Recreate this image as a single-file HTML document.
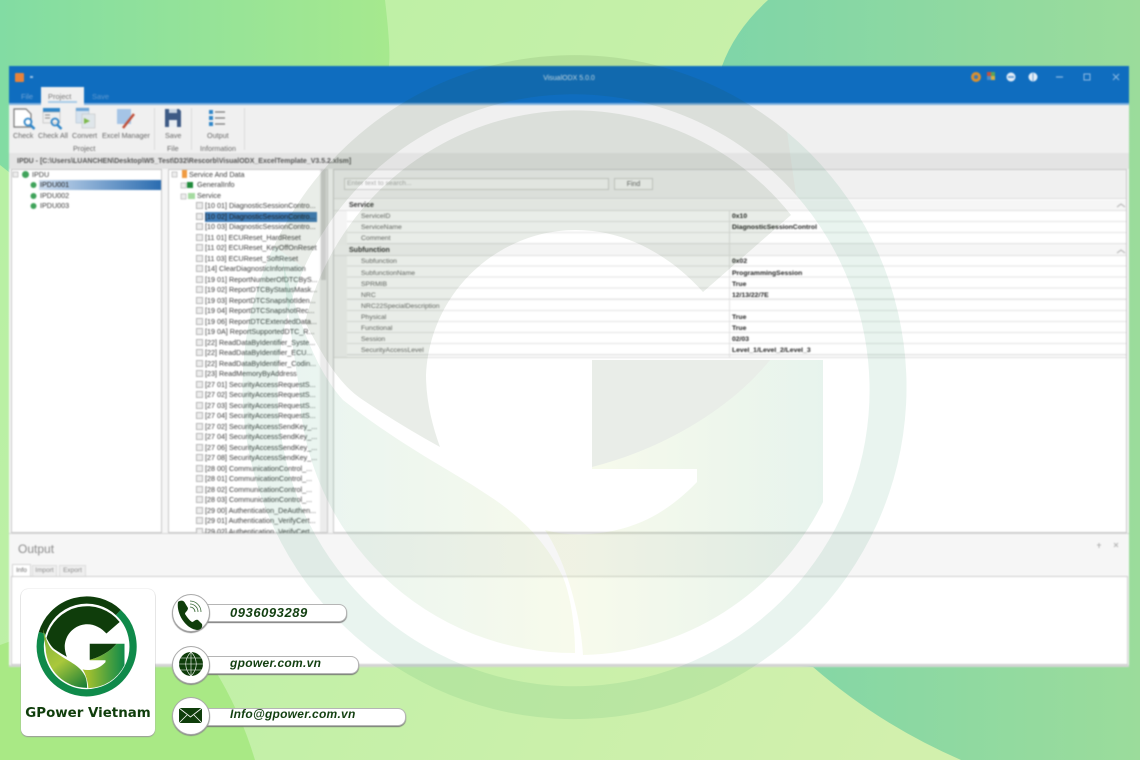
<!DOCTYPE html>
<html><head><meta charset="utf-8">
<style>
html,body{margin:0;padding:0;background:#c0f2a6}
#p{position:relative;width:1140px;height:760px;overflow:hidden;font-family:"Liberation Sans",sans-serif}
svg.l{position:absolute;left:0;top:0}
#w{position:absolute;left:9px;top:66px;width:1120px;height:601px;background:#f6f6f6;overflow:hidden;filter:blur(.85px)}
#w div{position:absolute;white-space:nowrap}
#w svg{position:absolute;overflow:visible}
.t{font-size:7.2px;color:#3c3c3c;line-height:10px}
.d{color:#1c1c1c}
.r{color:#666 !important}
.b{width:7px;height:7px;background:#eee;border:1px solid #b5b5b5;box-sizing:border-box;left:187px}
.pl{font-size:6.8px;color:#666;left:352px;line-height:10px}
.pv{font-size:6.8px;color:#222;left:723px;line-height:10px;font-weight:bold}
.pg{font-size:7px;color:#333;left:340px;line-height:10px;font-weight:bold}
.c{position:absolute;background:#fff;border-radius:50%;width:36px;height:36px;border:1px solid #aaa;box-shadow:0 1px 1px #888;box-sizing:content-box}
.pill{position:absolute;background:#fff;height:16px;border-radius:8px;border:1px solid #b5b5b5;border-left:0;box-shadow:0 1px 1px #777}
.ct{position:absolute;font-style:italic;color:#123f10;font-weight:bold;white-space:nowrap;filter:blur(.25px)}
</style></head><body><div id="p">
<svg class="l" width="1140" height="760" viewBox="0 0 1140 760">
<defs>
<linearGradient id="g0" x1="0" y1="0" x2="1" y2=".3"><stop offset="0" stop-color="#b6f0a3"/><stop offset="1" stop-color="#d2f0ad"/></linearGradient>
<linearGradient id="g1" x1="0" y1="0" x2="1" y2="0"><stop offset="0" stop-color="#82dca3"/><stop offset="1" stop-color="#a6e98e"/></linearGradient>
<linearGradient id="g2" x1="0" y1="0" x2="1" y2="0"><stop offset="0" stop-color="#7fd5a8"/><stop offset="1" stop-color="#9bdc9b"/></linearGradient>
</defs>
<rect width="1140" height="760" fill="url(#g0)"/>
<path d="M0,0H385Q392,60 388,70L300,400L0,165Z" fill="url(#g1)"/>
<path d="M768,0Q735,30 722,66V660L813,667Q880,725 961,760H1140V0Z" fill="url(#g2)"/>
<path d="M0,645Q120,600 213,667Q240,710 255,760H0Z" fill="#a9e985"/>
</svg>

<div id="w">
<div style="left:0;top:0;width:1120px;height:37px;background:#0f6dbf"></div>
<div style="left:0;top:37px;width:1120px;height:2px;background:#7fb0de"></div>
<div style="left:6px;top:7px;width:9px;height:9px;background:#e8833a;border-radius:1px"></div>
<div style="left:21px;top:10px;width:3px;height:2px;background:#9cc3e6"></div>
<div style="left:0;top:8px;width:1120px;text-align:center;font-size:7px;color:#cfe2f4;line-height:10px">VisualODX 5.0.0</div>
<div style="left:12px;top:26px;font-size:7.5px;color:#6ea3d6">File</div>
<div style="left:32px;top:21px;width:43px;height:18px;background:#f0f0f0"></div>
<div style="left:39px;top:26px;font-size:7.5px;color:#777">Project</div>
<div style="left:39px;top:35px;width:29px;height:2px;background:#a9cbe8"></div>
<div style="left:83px;top:26px;font-size:7.5px;color:#5f99d0">Save</div>
<svg style="left:0;top:0" width="1120" height="40">
<circle cx="967" cy="11" r="5" fill="#d9902f"/><circle cx="967" cy="11" r="2" fill="#3a78b5"/>
<rect x="978" y="6" width="4" height="4" fill="#c8503c"/><rect x="982" y="6" width="4" height="4" fill="#5aa55a"/><rect x="978" y="10" width="4" height="4" fill="#4a8ac8"/><rect x="982" y="10" width="4" height="4" fill="#d8b040"/>
<circle cx="1002" cy="11" r="4.500" fill="#e4eef8"/><rect x="999" y="10" width="6" height="2" fill="#6ea3d6"/>
<circle cx="1024" cy="11" r="4.500" fill="#e4eef8"/><path d="M1024,7V15" stroke="#6ea3d6"/>
<path d="M1047,11h7" stroke="#8fbbe3" stroke-width="1.200"/>
<rect x="1075" y="8" width="6" height="6" fill="none" stroke="#8fbbe3"/>
<path d="M1104,8l6,6M1110,8l-6,6" stroke="#8fbbe3"/>
</svg>

<div style="left:0;top:39px;width:1120px;height:48px;background:#f0f0f0"></div>
<svg style="left:0;top:0" width="260" height="90">
<path d="M5,43h12l5,5v13h-17z" fill="#fff" stroke="#777" stroke-width="1.200"/><circle cx="19" cy="56" r="3.500" fill="none" stroke="#2f86c9" stroke-width="1.800"/><path d="M21.500,59l4,4" stroke="#2f86c9" stroke-width="2.500"/>
<rect x="34" y="42" width="17" height="4" fill="#2f86c9"/><rect x="34" y="46" width="17" height="11" fill="#eee" stroke="#aaa" stroke-width=".5"/><path d="M36,49h5M36,52h5" stroke="#888"/><circle cx="46" cy="56" r="3.500" fill="none" stroke="#2f86c9" stroke-width="1.800"/><path d="M48.500,59l4,4" stroke="#2f86c9" stroke-width="2.500"/>
<rect x="67" y="42" width="13" height="15" fill="#d5e2ee" stroke="#a6bacb" stroke-width=".5"/><rect x="67" y="42" width="13" height="3" fill="#6ea7d8"/><rect x="73" y="48" width="13" height="14" fill="#dfe6ea" stroke="#bbb" stroke-width=".5"/><path d="M75,52l6,3-6,3z" fill="#7cb84a"/>
<rect x="108" y="43" width="14" height="15" fill="#a5c4e6"/><path d="M114,62L125,48" stroke="#c0503a" stroke-width="2.500"/>
<path d="M156,43h14l2,2v16h-16z" fill="#3d5a85"/><rect x="160" y="43" width="8" height="4" fill="#c9d5e2"/><rect x="160" y="54" width="8" height="7" fill="#e8edf2"/>
<rect x="200" y="44" width="4" height="4" fill="#2f86c9"/><rect x="200" y="50" width="4" height="4" fill="#2f86c9"/><rect x="200" y="56" width="4" height="4" fill="#2f86c9"/>
<path d="M206,46h10M206,52h10M206,58h10" stroke="#777" stroke-width="1.300"/>
<path d="M145.500,42v42M182.500,42v42M235.500,42v42" stroke="#dcdcdc"/>
</svg>
<div class="t r" style="left:4px;top:65px">Check</div>
<div class="t r" style="left:29px;top:65px">Check All</div>
<div class="t r" style="left:63px;top:65px">Convert</div>
<div class="t r" style="left:93px;top:65px">Excel Manager</div>
<div class="t r" style="left:156px;top:65px">Save</div>
<div class="t r" style="left:198px;top:65px">Output</div>
<div class="t r" style="left:64px;top:78px">Project</div>
<div class="t r" style="left:158px;top:78px">File</div>
<div class="t r" style="left:191px;top:78px">Information</div>

<div style="left:0;top:87px;width:1120px;height:16px;background:#e4e4e4"></div>
<div style="left:8px;top:91px;font-size:7px;font-weight:bold;color:#555;line-height:10px">IPDU - [C:\Users\LUANCHEN\Desktop\W5_Test\D32\Rescorb\VisualODX_ExcelTemplate_V3.5.2.xlsm]</div>

<div style="left:2px;top:103px;width:151px;height:364px;background:#fff;border:1px solid #c8c8c8;box-sizing:border-box"></div>
<div style="left:159px;top:103px;width:160px;height:364px;background:#fff;border:1px solid #c8c8c8;box-sizing:border-box"></div>
<div style="left:311px;top:104px;width:7px;height:362px;background:#ececec"></div>
<div style="left:312px;top:104px;width:5px;height:110px;background:#cfcfcf"></div>
<div style="left:324px;top:103px;width:794px;height:364px;background:#fff;border:1px solid #c8c8c8;box-sizing:border-box"></div>

<svg style="left:0;top:100px" width="200" height="50">
<rect x="4" y="6" width="5" height="5" fill="#eee" stroke="#aaa" stroke-width=".6"/>
<circle cx="16.500" cy="8.500" r="3.500" fill="#3fa35a"/>
<circle cx="24.500" cy="19" r="3" fill="#3fa35a"/><circle cx="24.500" cy="30" r="3" fill="#3fa35a"/><circle cx="24.500" cy="40" r="3" fill="#3fa35a"/>
<rect x="163" y="6" width="5" height="5" fill="#eee" stroke="#aaa" stroke-width=".6"/>
<rect x="172" y="17" width="5" height="5" fill="#eee" stroke="#aaa" stroke-width=".6"/>
<rect x="172" y="28" width="5" height="5" fill="#eee" stroke="#aaa" stroke-width=".6"/>
<rect x="173" y="4" width="5" height="8" fill="#f09a40"/>
<rect x="178" y="16" width="6" height="6" fill="#1f8a3a"/>
<rect x="179" y="27" width="7" height="6" fill="#a5dba0"/>
</svg>
<div class="t" style="left:23px;top:104px">IPDU</div>
<div style="left:30px;top:114px;width:122px;height:10px;background:linear-gradient(90deg,#cddcee,#2a6cb0)"></div>
<div class="t d" style="left:31px;top:114px">IPDU001</div>
<div class="t" style="left:31px;top:125px">IPDU002</div>
<div class="t" style="left:31px;top:135px">IPDU003</div>

<div class="t" style="left:180px;top:104px">Service And Data</div>
<div class="t" style="left:188px;top:114px">GeneralInfo</div>
<div class="t" style="left:188px;top:125px">Service</div>
<div style="left:196px;top:146px;width:112px;height:10px;background:#3f7cb8"></div>

<div class="b" style="top:136px"></div><div class="t" style="left:196px;top:135px">[10 01] DiagnosticSessionContro...</div>
<div class="b" style="top:147px"></div><div class="t d" style="left:196px;top:146px">[10 02] DiagnosticSessionContro...</div>
<div class="b" style="top:157px"></div><div class="t" style="left:196px;top:156px">[10 03] DiagnosticSessionContro...</div>
<div class="b" style="top:168px"></div><div class="t" style="left:196px;top:167px">[11 01] ECUReset_HardReset</div>
<div class="b" style="top:178px"></div><div class="t" style="left:196px;top:177px">[11 02] ECUReset_KeyOffOnReset</div>
<div class="b" style="top:189px"></div><div class="t" style="left:196px;top:188px">[11 03] ECUReset_SoftReset</div>
<div class="b" style="top:199px"></div><div class="t" style="left:196px;top:198px">[14] ClearDiagnosticInformation</div>
<div class="b" style="top:210px"></div><div class="t" style="left:196px;top:209px">[19 01] ReportNumberOfDTCByS...</div>
<div class="b" style="top:220px"></div><div class="t" style="left:196px;top:219px">[19 02] ReportDTCByStatusMask...</div>
<div class="b" style="top:231px"></div><div class="t" style="left:196px;top:230px">[19 03] ReportDTCSnapshotIden...</div>
<div class="b" style="top:241px"></div><div class="t" style="left:196px;top:240px">[19 04] ReportDTCSnapshotRec...</div>
<div class="b" style="top:252px"></div><div class="t" style="left:196px;top:251px">[19 06] ReportDTCExtendedData...</div>
<div class="b" style="top:262px"></div><div class="t" style="left:196px;top:261px">[19 0A] ReportSupportedDTC_R...</div>
<div class="b" style="top:273px"></div><div class="t" style="left:196px;top:272px">[22] ReadDataByIdentifier_Syste...</div>
<div class="b" style="top:283px"></div><div class="t" style="left:196px;top:282px">[22] ReadDataByIdentifier_ECU...</div>
<div class="b" style="top:294px"></div><div class="t" style="left:196px;top:293px">[22] ReadDataByIdentifier_Codin...</div>
<div class="b" style="top:304px"></div><div class="t" style="left:196px;top:303px">[23] ReadMemoryByAddress</div>
<div class="b" style="top:315px"></div><div class="t" style="left:196px;top:314px">[27 01] SecurityAccessRequestS...</div>
<div class="b" style="top:325px"></div><div class="t" style="left:196px;top:324px">[27 02] SecurityAccessRequestS...</div>
<div class="b" style="top:336px"></div><div class="t" style="left:196px;top:335px">[27 03] SecurityAccessRequestS...</div>
<div class="b" style="top:346px"></div><div class="t" style="left:196px;top:345px">[27 04] SecurityAccessRequestS...</div>
<div class="b" style="top:357px"></div><div class="t" style="left:196px;top:356px">[27 02] SecurityAccessSendKey_...</div>
<div class="b" style="top:367px"></div><div class="t" style="left:196px;top:366px">[27 04] SecurityAccessSendKey_...</div>
<div class="b" style="top:378px"></div><div class="t" style="left:196px;top:377px">[27 06] SecurityAccessSendKey_...</div>
<div class="b" style="top:388px"></div><div class="t" style="left:196px;top:387px">[27 08] SecurityAccessSendKey_...</div>
<div class="b" style="top:399px"></div><div class="t" style="left:196px;top:398px">[28 00] CommunicationControl_...</div>
<div class="b" style="top:409px"></div><div class="t" style="left:196px;top:408px">[28 01] CommunicationControl_...</div>
<div class="b" style="top:420px"></div><div class="t" style="left:196px;top:419px">[28 02] CommunicationControl_...</div>
<div class="b" style="top:430px"></div><div class="t" style="left:196px;top:429px">[28 03] CommunicationControl_...</div>
<div class="b" style="top:441px"></div><div class="t" style="left:196px;top:440px">[29 00] Authentication_DeAuthen...</div>
<div class="b" style="top:451px"></div><div class="t" style="left:196px;top:450px">[29 01] Authentication_VerifyCert...</div>
<div class="b" style="top:462px"></div><div class="t" style="left:196px;top:461px">[29 02] Authentication_VerifyCert...</div>

<div style="left:325px;top:104px;width:792px;height:28px;background:#f0f0f0;border-bottom:1px solid #ddd"></div>
<div style="left:335px;top:112px;width:265px;height:12px;background:#f6f6f6;border:1px solid #ccc;box-sizing:border-box;font-size:6.800px;color:#aaa;line-height:10px;padding-left:2px">Enter text to search...</div>
<div style="left:605px;top:112px;width:39px;height:12px;background:#f6f6f6;border:1px solid #ccc;box-sizing:border-box;font-size:7px;color:#666;line-height:11px;text-align:center">Find</div>

<div style="left:325px;top:133px;width:792px;height:158px;background:#fff"></div>
<div style="left:325px;top:133px;width:13px;height:158px;background:#f4f4f4"></div>
<div style="left:325px;top:134px;width:792px;height:11px;background:#f6f6f6;border-bottom:1px solid #e0e0e0;box-sizing:border-box"></div>
<div style="left:338px;top:145px;width:779px;height:146px;background:repeating-linear-gradient(180deg,transparent 0,transparent 10px,#e4e4e4 10px,#e4e4e4 11.100px)"></div>
<div style="left:325px;top:179px;width:792px;height:11px;background:#f6f6f6;border-bottom:1px solid #e0e0e0;box-sizing:border-box"></div>
<div style="left:720px;top:145px;width:1px;height:146px;background:#e2e2e2"></div>
<div style="left:325px;top:291px;width:792px;height:1px;background:#ddd"></div>
<svg style="left:0;top:130px" width="1120" height="60"><path d="M1108,11l4,-3l4,3M1108,57l4,-3l4,3" fill="none" stroke="#bdbdbd" stroke-width="1.200"/></svg>
<div class="pg" style="top:135px">Service</div>
<div class="pl" style="top:146px">ServiceID</div><div class="pv" style="top:146px">0x10</div>
<div class="pl" style="top:157px">ServiceName</div><div class="pv" style="top:157px">DiagnosticSessionControl</div>
<div class="pl" style="top:168px">Comment</div>
<div class="pg" style="top:180px">Subfunction</div>
<div class="pl" style="top:191px">Subfunction</div><div class="pv" style="top:191px">0x02</div>
<div class="pl" style="top:203px">SubfunctionName</div><div class="pv" style="top:203px">ProgrammingSession</div>
<div class="pl" style="top:214px">SPRMIB</div><div class="pv" style="top:214px">True</div>
<div class="pl" style="top:225px">NRC</div><div class="pv" style="top:225px">12/13/22/7E</div>
<div class="pl" style="top:236px">NRC22SpecialDescription</div>
<div class="pl" style="top:247px">Physical</div><div class="pv" style="top:247px">True</div>
<div class="pl" style="top:258px">Functional</div><div class="pv" style="top:258px">True</div>
<div class="pl" style="top:269px">Session</div><div class="pv" style="top:269px">02/03</div>
<div class="pl" style="top:280px">SecurityAccessLevel</div><div class="pv" style="top:280px">Level_1/Level_2/Level_3</div>

<div style="left:0;top:467px;width:1120px;height:42px;background:#f6f6f6;border-top:1px solid #d5d5d5;box-sizing:border-box"></div>
<div style="left:9px;top:476px;font-size:12px;color:#8a8a8a">Output</div>
<svg style="left:0;top:470px" width="1120" height="20"><path d="M1088,9h4M1090,7v5M1105,7l4,4M1109,7l-4,4" stroke="#b5b5b5"/></svg>
<div style="left:3px;top:498px;width:19px;height:13px;background:#fff;border:1px solid #d5d5d5;box-sizing:border-box;font-size:6.500px;color:#666;line-height:11px;text-align:center">Info</div>
<div style="left:23px;top:499px;width:25px;height:12px;background:#efefef;border:1px solid #dcdcdc;box-sizing:border-box;font-size:6.500px;color:#888;line-height:10px;text-align:center">Import</div>
<div style="left:50px;top:499px;width:27px;height:12px;background:#efefef;border:1px solid #dcdcdc;box-sizing:border-box;font-size:6.500px;color:#888;line-height:10px;text-align:center">Export</div>
<div style="left:2px;top:510px;width:1117px;height:89px;background:#fff;border:1px solid #cfcfcf;box-sizing:border-box"></div>
<div style="left:0;top:599px;width:1120px;height:2px;background:#d5d5d5"></div>
</div>

<svg class="l" width="1140" height="760" viewBox="0 0 1140 760">
<defs>
<linearGradient id="tg" x1="575" y1="0" x2="823" y2="0" gradientUnits="userSpaceOnUse"><stop offset="0" stop-color="#b4d23c" stop-opacity=".1"/><stop offset="1" stop-color="#0f8a4a" stop-opacity=".1"/></linearGradient>
<linearGradient id="lg" x1="300" y1="0" x2="575" y2="0" gradientUnits="userSpaceOnUse"><stop offset="0" stop-color="#0f8a5a" stop-opacity=".09"/><stop offset="1" stop-color="#b4d23c" stop-opacity=".1"/></linearGradient>
<linearGradient id="sg" x1="575" y1="0" x2="823" y2="0" gradientUnits="userSpaceOnUse"><stop offset="0" stop-color="#a3c02e"/><stop offset="1" stop-color="#0f8a4a"/></linearGradient>
<linearGradient id="sl" x1="283" y1="262" x2="575" y2="653" gradientUnits="userSpaceOnUse"><stop offset="0" stop-color="#7fb03a"/><stop offset=".5" stop-color="#aac83b"/><stop offset="1" stop-color="#127a35"/></linearGradient>
</defs>
<path d="M787,132A332,332 0 1 1 274,246L304,268A296,296 0 1 0 796,195Z" fill="#0a8250" fill-opacity=".09"/>
<path d="M274,246A332,332 0 0 1 787,132L796,195A296,296 0 0 0 304,268Z" fill="#2a4a20" fill-opacity=".1"/>
<path d="M791,215A277,277 0 0 0 305,322C325,360 340,385 363,400Q400,425 440,447C432,425 426,400 426,375C430,290 500,230 576,230C625,230 670,255 703,292Z" fill="#2a4a20" fill-opacity=".1"/>
<path d="M592,360H770C730,410 660,450 592,467Z" fill="#2a4a20" fill-opacity=".1"/>
<path d="M283,262C300,330 320,375 343,400C400,445 450,470 480,490C520,515 545,540 563,577C572,600 575,630 575,653A275,275 0 0 1 299,388C292,340 286,300 283,262Z" fill="url(#lg)"/>
<path d="M592,469H697V482C670,510 640,528 600,533Q570,537 545,530C565,560 580,610 583,655A275,275 0 0 0 823,502V360H770C730,410 660,450 592,467Z" fill="url(#tg)"/>
</svg>

<div style="position:absolute;left:21px;top:589px;width:134px;height:147px;background:#fff;border-radius:7px;box-shadow:0 1px 1px #999,0 0 1px #bbb"></div>
<svg class="l" width="1140" height="760" viewBox="0 0 1140 760" style="filter:blur(.3px)">
<g transform="translate(87,648) scale(.1506) translate(-574,-388)">
<path d="M782,152A308,308 0 1 1 277,288" fill="none" stroke="#0f8a4a" stroke-width="48"/>
<path d="M277,288A308,308 0 0 1 782,152" fill="none" stroke="#0f3d0b" stroke-width="48"/>
<path d="M791,215A277,277 0 0 0 305,322C325,360 340,385 363,400Q400,425 440,447C432,425 426,400 426,375C430,290 500,230 576,230C625,230 670,255 703,292Z" fill="#0f3d0b"/>
<path d="M592,360H770C730,410 660,450 592,467Z" fill="#0f3d0b"/>
<path d="M283,262C300,330 320,375 343,400C400,445 450,470 480,490C520,515 545,540 563,577C572,600 575,630 575,653A275,275 0 0 1 299,388C292,340 286,300 283,262Z" fill="url(#sl)"/>
<path d="M592,469H697V482C670,510 640,528 600,533Q570,537 545,530C565,560 580,610 583,655A275,275 0 0 0 823,502V360H770C730,410 660,450 592,467Z" fill="url(#sg)"/>
</g>
</svg>
<div style="position:absolute;left:21px;top:705px;width:134px;text-align:center;font-family:'DejaVu Sans',sans-serif;font-size:13.400px;font-weight:bold;color:#0f3d0b;line-height:17px;filter:blur(.2px)">GPower Vietnam</div>

<div class="pill" style="left:195px;top:604px;width:151px"></div>
<div class="pill" style="left:195px;top:656px;width:163px"></div>
<div class="pill" style="left:195px;top:708px;width:210px"></div>
<div class="c" style="left:172px;top:594px"></div>
<div class="c" style="left:172px;top:646px"></div>
<div class="c" style="left:172px;top:697px"></div>
<svg class="l" width="1140" height="760" viewBox="0 0 1140 760" style="filter:blur(.25px)">
<path d="M178,602C180,600 184,600 185,603L188,608C188,611 185,612 185,614C187,617 189,620 192,622C194,622 195,619 198,620L202,624C203,628 200,630 197,630C186,629 176,614 178,602Z" fill="#0f3d0b"/>
<path d="M190,604a8,8 0 0 1 8,8M190,601a11,11 0 0 1 11,11M190,607a5,5 0 0 1 5,5" fill="none" stroke="#3a6a38" stroke-width=".8"/>
<circle cx="191" cy="664" r="12" fill="#0f3d0b"/>
<path d="M179,664h24M180,658h22M180,670h22M191,652v24M191,652c-7,7 -7,17 0,24M191,652c7,7 7,17 0,24" fill="none" stroke="#fff" stroke-width=".6"/>
<rect x="179" y="708" width="23" height="15" fill="#0f3d0b"/>
<path d="M179,708l11.500,9l11.500,-9M179,723l8,-8M202,723l-8,-8" fill="none" stroke="#fff" stroke-width=".8"/>
</svg>
<div class="ct" style="left:230px;top:605px;font-size:13px;letter-spacing:.55px;line-height:16px">0936093289</div>
<div class="ct" style="left:230px;top:656px;font-size:12px;letter-spacing:.3px;line-height:15px">gpower.com.vn</div>
<div class="ct" style="left:230px;top:707px;font-size:12px;letter-spacing:.25px;line-height:15px">Info@gpower.com.vn</div>
</div></body></html>
